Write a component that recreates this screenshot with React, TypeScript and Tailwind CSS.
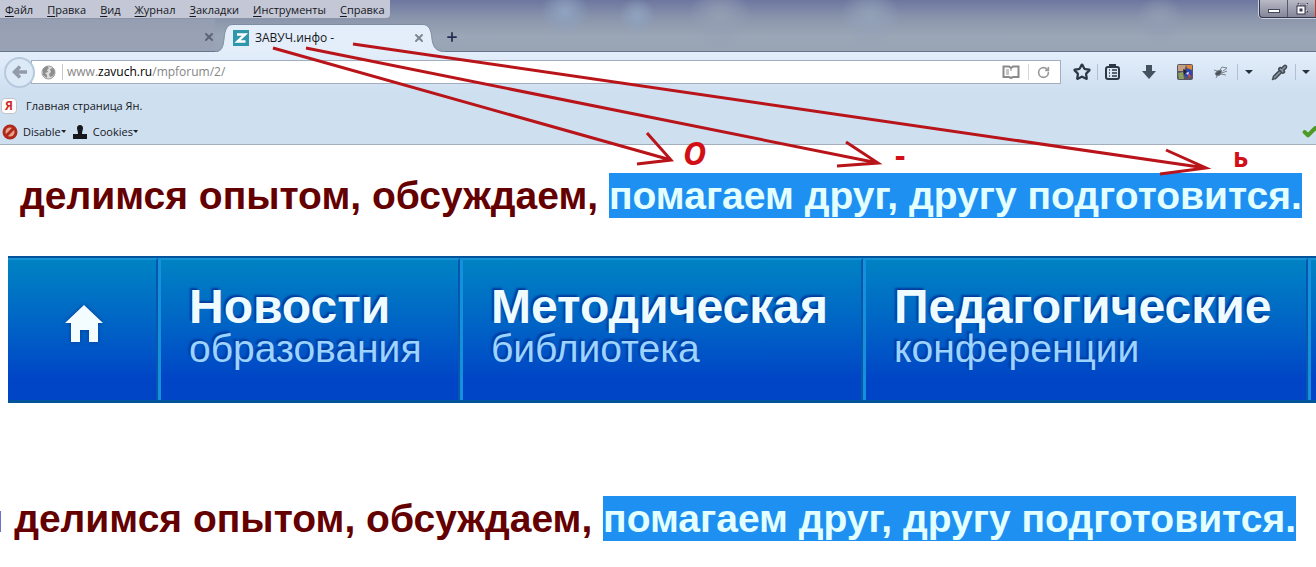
import React from 'react';
import { Star, RotateCw, Plus, X, Check, Pipette } from 'lucide-react';

const menuItems = ['Файл', 'Правка', 'Вид', 'Журнал', 'Закладки', 'Инструменты', 'Справка'];

const navItems = [
  { title: 'Новости', subtitle: 'образования', width: 'w-[302px]' },
  { title: 'Методическая', subtitle: 'библиотека', width: 'w-[403px]' },
  { title: 'Педагогические', subtitle: 'конференции', width: 'w-[445px]' },
];

function MenuBar() {
  return (
    <div className="flex h-[18px] items-start justify-between">
      <nav className="flex h-[18px] items-center gap-[14px] rounded-br bg-[#c3c7d6] pl-[5px] pr-[5px] text-[11px]">
        {menuItems.map((item) => (
          <button key={item} className="pt-[2px] leading-4">
            <span className="underline underline-offset-2">{item[0]}</span>
            {item.slice(1)}
          </button>
        ))}
      </nav>
      <div className="flex h-[18px] w-[57px] overflow-hidden rounded-bl border-b border-l border-[#34364d] bg-gradient-to-b from-[#b9bac6] to-[#858799] ring-1 ring-[#c9cfdb]">
        <button aria-label="Свернуть" className="flex w-7 items-end justify-center border-r border-[#55576c] pb-1">
          <span className="h-1 w-3 border border-[#44465c] bg-white" />
        </button>
        <button aria-label="Развернуть" className="flex flex-1 items-center justify-center">
          <svg width="12" height="12" viewBox="0 0 12 12" fill="none">
            <path d="M3 3V1H11V8H9" stroke="#34364d" strokeWidth="2.5" />
            <path d="M3 3V1H11V8H9" stroke="#fff" />
            <rect x="1" y="3" width="8" height="8" fill="#fff" stroke="#34364d" />
            <rect x="4" y="6" width="2" height="2" fill="#55576c" stroke="#34364d" />
          </svg>
        </button>
        <span className="w-px bg-[#c0392b]" />
      </div>
    </div>
  );
}

function TabBar() {
  return (
    <div className="flex h-[34px] items-end border-b border-[#66758c]">
      <div className="flex h-[33px] w-[215px] items-center justify-end border-t border-[#8e93a8] bg-[#98a1b3]/70 pt-1">
        <button aria-label="Закрыть вкладку"><X size={12} strokeWidth={4} color="#5d6478" /></button>
      </div>
      <div className="relative -mb-px flex h-7 w-[230px] items-center">
        <svg className="absolute inset-0 h-full w-full" viewBox="0 0 230 28" preserveAspectRatio="none">
          <path d="M0 28C7 28 8 23 9 15C10 5 12 .5 18 .5H207C214 .5 216 5 217 15C218 23 221 28 230 28Z" fill="#e3eefa" />
          <path d="M0 27.500C7 27.500 8 23 9 15C10 5 12 .5 18 .5H207C214 .5 216 5 217 15C218 23 221 27.500 230 27.500" fill="none" stroke="#7f8da4" />
        </svg>
        <div className="relative flex w-full items-center pl-[18px] pr-5">
          <svg width="16" height="16" viewBox="0 0 16 16">
            <rect width="16" height="16" fill="#2f97ab" />
            <path d="M4 4.500H12L4.500 11.500H12.500" fill="none" stroke="#fff" strokeWidth="2.400" />
          </svg>
          <span className="ml-[6px] flex-1">ЗАВУЧ.инфо -</span>
          <button aria-label="Закрыть вкладку"><X size={12} strokeWidth={4} color="#7d8594" /></button>
        </div>
      </div>
      <button aria-label="Новая вкладка" className="mb-[7px]"><Plus size={14} strokeWidth={3} color="#262d50" /></button>
    </div>
  );
}

function Caret() {
  return (
    <svg width="8" height="4" viewBox="0 0 8 4"><path d="M0 0H8L4 4Z" fill="#26313b" /></svg>
  );
}

function Toolbar() {
  return (
    <div className="flex h-10 items-center bg-gradient-to-b from-[#e3eefa] to-[#cedff1] pl-1">
      <button aria-label="Назад" className="z-10 flex h-[31px] w-[31px] shrink-0 items-center justify-center rounded-full border-2 border-[#b8c9de] bg-[#dce9f7]">
        <svg width="16" height="14" viewBox="0 0 16 14">
          <path d="M8 1.500L2.500 7L8 12.500M3 7H15" fill="none" stroke="#929baa" strokeWidth="3.500" />
        </svg>
      </button>
      <div className="-ml-1 flex h-6 min-w-0 flex-1 items-center border border-[#a3afbe] bg-white pl-[9px] pr-[10px]">
        <svg width="15" height="15" viewBox="0 0 15 15">
          <circle cx="7.500" cy="7.500" r="6.500" fill="#dcdcdc" stroke="#9a9a9a" />
          <path d="M2 4L6 1L8 3L6 5L7 7L4 8L6 10L6 13L2 10Z" fill="#8d8d8d" />
          <path d="M9 4L12 3L14 7L12 11L9 12L8 9L10 7Z" fill="#8d8d8d" />
        </svg>
        <span className="ml-[6px] h-4 w-px bg-[#c3c8cf]" />
        <div className="relative ml-1 flex-1">
          <input aria-label="Адрес" className="w-full text-transparent outline-none" defaultValue="www.zavuch.ru/mpforum/2/" />
          <span aria-hidden="true" className="pointer-events-none absolute inset-0 text-[#858585]">
            www.<span className="text-black">zavuch.ru</span>/mpforum/2/
          </span>
        </div>
        <button aria-label="Режим чтения">
          <svg width="18" height="14" viewBox="0 0 18 14" fill="none" stroke="#8a8a8a">
            <path d="M9 3L7 1.500H1.500V12H7L9 13L11 12H16.500V1.500H11Z" strokeWidth="2" />
            <path d="M4 5H7M4 7H7M4 9H7M9 3V6" />
          </svg>
        </button>
        <span className="mx-2 h-4 w-px bg-[#d3d7dc]" />
        <button aria-label="Обновить"><RotateCw size={13} strokeWidth={3} color="#9a9a9a" /></button>
      </div>
      <div className="flex shrink-0 items-center pl-3">
        <button aria-label="В закладки"><Star size={18} strokeWidth={3} color="#2c3844" /></button>
        <span className="mx-[6px] h-4 w-px bg-[#b1c0d0]" />
        <button aria-label="Список закладок">
          <svg width="17" height="16" viewBox="0 0 17 16" fill="none" stroke="#2c3844">
            <path d="M6 3V1H11V3" strokeWidth="2" />
            <rect x="2" y="3" width="13" height="12" rx="2" strokeWidth="2" />
            <path d="M1 7H3M14 7H16M1 11H3M14 11H16" strokeWidth="2" />
            <path d="M5 6H6M8 6H13M5 9H6M8 9H13M5 12H6M8 12H13" strokeWidth="1.500" />
          </svg>
        </button>
        <button aria-label="Загрузки" className="ml-5">
          <svg width="16" height="16" viewBox="0 0 16 16"><path d="M5 1H11V7H15L8 15L1 7H5Z" fill="#44515e" /></svg>
        </button>
        <button aria-label="Расширение" className="ml-5">
          <svg width="16" height="16" viewBox="0 0 16 16">
            <rect width="16" height="16" rx="2" fill="#5a5562" />
            <path d="M1 1H9L7 7H1Z" fill="#c6a084" />
            <path d="M9 1H15V6L10 4Z" fill="#d98743" />
            <path d="M1 9L6 8L7 15H2Z" fill="#8ba05c" />
            <circle cx="11" cy="9" r="4" fill="#2c48b4" />
            <path d="M10 8L14 12L12 14Z" fill="#d7434a" />
            <path d="M9 9L12 8L11 11Z" fill="#dfe6ff" />
            <path d="M6 5L10 7L7 11Z" fill="#24242c" />
          </svg>
        </button>
        <button aria-label="Отладка" className="ml-5">
          <svg width="16" height="16" viewBox="0 0 16 16" fill="none" stroke="#7b838c">
            <path d="M2 10L4 7L8 6L9 8L7 11L4 12Z" fill="#4b535c" />
            <path d="M7 6L9 3L14 4L10 7M9 9L14 7M8 10L13 11M1 6L4 7M4 12L3 14" />
          </svg>
        </button>
        <span className="ml-2 mr-[7px] h-4 w-px bg-[#b1c0d0]" />
        <button aria-label="Меню отладки"><Caret /></button>
        <button aria-label="Пипетка" className="ml-[18px]"><Pipette size={17} fill="#8b939c" color="#3f4852" /></button>
        <span className="ml-[7px] mr-[6px] h-4 w-px bg-[#b1c0d0]" />
        <button aria-label="Меню пипетки" className="mr-[6px]"><Caret /></button>
      </div>
    </div>
  );
}

function BookmarkRows() {
  return (
    <div className="border-b border-[#a3afbc] bg-[#cedff0] text-[11px]">
      <div className="flex h-[27px] items-center pl-[1px]">
        <a href="#yandex" className="flex items-center gap-[9px]">
          <span className="flex h-4 w-4 items-center justify-center rounded border border-[#c3c3c9] bg-white text-[12px] font-bold text-[#cf2a2a]">Я</span>
          <span>Главная страница Ян.</span>
        </a>
      </div>
      <div className="flex h-[25px] items-center pl-[2px]">
        <button className="flex items-center">
          <svg width="16" height="16" viewBox="0 0 16 16">
            <circle cx="8" cy="8" r="7.500" fill="#b02a1c" />
            <circle cx="8" cy="8" r="4.500" fill="#e8a391" />
            <path d="M4 12L12 4" stroke="#b02a1c" strokeWidth="3" />
          </svg>
          <span className="ml-[5px]">Disable</span>
          <svg width="5" height="4" viewBox="0 0 5 4"><path d="M0 0H5L3 3Z" fill="#222" /></svg>
        </button>
        <button className="ml-[6px] flex items-center">
          <svg width="16" height="16" viewBox="0 0 16 16">
            <path d="M5 4C5 0 11 0 11 4C11 6 10 7 10 10H15V15H1V10H6C6 7 5 6 5 4Z" fill="#15181c" />
          </svg>
          <span className="ml-[5px]">Cookies</span>
          <svg width="5" height="4" viewBox="0 0 5 4"><path d="M0 0H5L3 3Z" fill="#222" /></svg>
        </button>
        <Check className="-mr-[2px] ml-auto" size={16} strokeWidth={6} color="#4d9a24" />
      </div>
    </div>
  );
}

function Headline({ text, selected }: { text: string; selected: string }) {
  return (
    <h2 className="whitespace-pre text-[39px] font-bold leading-[45px] text-[#640000]">
      {text} <span className="inline-block bg-[#1e90f2] text-[#e3ffff]">{selected}</span>
    </h2>
  );
}

function SiteNav() {
  return (
    <nav className="ml-2 flex h-[147px] overflow-hidden border-b-[3px] border-t-2 border-[#00549c] bg-gradient-to-b from-[#0083c3] to-[#0045c6] to-85%">
      <a href="#home" aria-label="Главная" className="flex w-[150px] shrink-0 items-center justify-center border-r-2 border-t-2 border-r-[#0758ab] border-t-[#1591d4] pb-3 pl-1">
        <svg width="40" height="40" viewBox="0 0 40 40" className="drop-shadow-[0_0_2px_#003c95]">
          <path d="M20 1L39 19H34V38H25V26H16V38H7V19H1Z" fill="#f3fcff" />
        </svg>
      </a>
      {navItems.map((item) => (
        <a
          key={item.title}
          href="#section"
          className={`${item.width} shrink-0 border-l-[3px] border-r-2 border-t-2 border-l-[#1490dd] border-r-[#0758ab] border-t-[#1591d4] pl-7 pt-6 [text-shadow:-2px_-2px_2px_#003a9c]`}
        >
          <div className="text-[48px] font-bold leading-[46px] text-[#effcff]">{item.title}</div>
          <div className="text-[39px] leading-[38px] text-[#9dd3ff]">{item.subtitle}</div>
        </a>
      ))}
      <div className="flex-1 border-l-[3px] border-t-2 border-l-[#1490dd] border-t-[#1591d4]" />
    </nav>
  );
}

// Red pencil marks drawn over the page
function Notes() {
  return (
    <div className="pointer-events-none absolute inset-0 font-['Noto_Sans',sans-serif] font-bold text-[#d20f16]">
      <svg className="absolute left-0 top-0" width="1316" height="180" viewBox="0 0 1316 180" fill="none" stroke="#b91419" strokeWidth="3">
        <path d="M273 48L671 160M647 133L671 160L637 164" />
        <path d="M306 48L878 163M846 142L878 163L837 166" />
        <path d="M353 44L1206 168M1166 150L1206 168L1160 174" />
      </svg>
      <span className="absolute left-[683px] top-[131px] text-[32px] italic leading-[44px]">О</span>
      <span className="absolute left-[895px] top-[133px] text-[32px] leading-[44px]">-</span>
      <span className="absolute left-[1233px] top-[135px] text-[26px] leading-[44px]">ь</span>
    </div>
  );
}

export default function App(): React.ReactElement {
  return (
    <div className="relative min-h-screen overflow-hidden bg-white font-['Liberation_Sans',sans-serif]">
      <header className="font-['Open_Sans',sans-serif] text-[12px] leading-4 text-[#15171c]">
        <div className="bg-[radial-gradient(circle_at_565px_12px,#8fa3c0_0,transparent_24px),radial-gradient(circle_at_637px_16px,#8fa3c0_0,transparent_18px),radial-gradient(circle_at_720px_18px,#949fb4_0,transparent_32px),radial-gradient(circle_at_870px_18px,#93a2b8_0,transparent_30px),radial-gradient(circle_at_1160px_20px,#919db3_0,transparent_24px),linear-gradient(#6d77a0_0,#8a95ac_18px,#9ba6b6_36px,#98a4b4)]">
          <MenuBar />
          <TabBar />
        </div>
        <Toolbar />
        <BookmarkRows />
      </header>
      <main>
        <div className="pl-5 pt-7">
          <Headline text="делимся опытом, обсуждаем," selected="помагаем друг, другу подготовится." />
        </div>
        <div className="pt-[38px]">
          <SiteNav />
        </div>
        <div className="flex justify-end pr-5 pt-[93px]">
          <Headline text="и делимся опытом, обсуждаем," selected="помагаем друг, другу подготовится." />
        </div>
      </main>
      <Notes />
    </div>
  );
}
